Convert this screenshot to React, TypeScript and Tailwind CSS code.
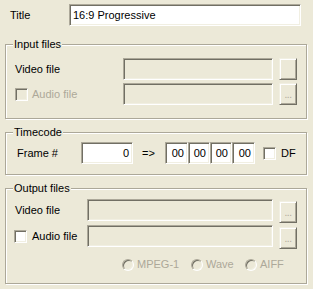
const sunken =
  "border border-t-[#ACA899] border-l-[#ACA899] border-b-white border-r-white shadow-[inset_1px_1px_0_#716F64,inset_-1px_-1px_0_#F1EFE2]";
const raised =
  "border border-t-[#F1EFE2] border-l-[#F1EFE2] border-b-[#716F64] border-r-[#716F64] shadow-[inset_1px_1px_0_white,inset_-1px_-1px_0_#ACA899]";

function Group({ label, className, children }: { label: string; className: string; children: React.ReactNode }) {
  return (
    <div className={`relative ml-[5px] w-[302px] border border-[#ACA899] shadow-[1px_1px_0_white,inset_1px_1px_0_white] ${className}`}>
      <span className="absolute left-[7px] top-[-7px] bg-[#ECE9D8] px-[1px] leading-[13px]">{label}</span>
      {children}
    </div>
  );
}

function Browse({ dots, className = "" }: { dots?: boolean; className?: string }) {
  return (
    <div className={`flex h-[22px] w-[18px] items-center justify-center bg-[#ECE9D8] text-[10px] leading-none text-[#ACA899] ${raised} ${className}`}>
      {dots ? <span className="mt-[1px] tracking-[-0.5px]">...</span> : null}
    </div>
  );
}

function Check({ disabled }: { disabled?: boolean }) {
  return <div className={`h-[13px] w-[13px] shrink-0 ${sunken} ${disabled ? "bg-[#ECE9D8]" : "bg-white"}`} />;
}

function Radio({ label }: { label: string }) {
  return (
    <div className="flex items-center gap-[3px] text-[#ACA899]">
      <div className="h-[12px] w-[12px] rounded-full border border-t-[#ACA899] border-l-[#ACA899] border-b-white border-r-white shadow-[inset_1px_1px_0_#716F64,inset_-1px_-1px_0_#F1EFE2]" />
      <span>{label}</span>
    </div>
  );
}

function TcBox({ className }: { className: string }) {
  return <div className={`flex h-[22px] items-center justify-end bg-white pr-[3px] ${sunken} ${className}`}>00</div>;
}

export default function App() {
  return (
    <div className="h-[289px] w-[313px] overflow-hidden bg-[#ECE9D8] font-['Liberation_Sans',Arial,sans-serif] text-[11px] leading-[13px] text-black">
      {/* title */}
      <div className="flex items-center pt-[4px]">
        <span className="w-[69px] pl-[10px]">Title</span>
        <div className={`flex h-[22px] w-[232px] items-center bg-white pl-[3px] ${sunken}`}>16:9 Progressive</div>
      </div>

      <Group label="Input files" className="mt-[18px] h-[75px] pl-[9px] pt-[13px]">
        <div className="flex flex-col gap-[3px]">
          <div className="flex h-[22px] items-center">
            <span className="w-[108px]">Video file</span>
            <div className={`h-[22px] w-[150px] ${sunken}`} />
            <Browse className="ml-[6px]" />
          </div>
          <div className="flex h-[22px] items-center">
            <div className="flex w-[108px] items-center gap-[4px] text-[#ACA899]">
              <Check disabled />
              <span>Audio file</span>
            </div>
            <div className={`h-[22px] w-[150px] ${sunken}`} />
            <Browse dots className="ml-[6px]" />
          </div>
        </div>
      </Group>

      <Group label="Timecode" className="mt-[13px] h-[43px] pl-[11px] pt-[9px]">
        <div className="flex h-[22px] items-center">
          <span className="w-[64px]">Frame #</span>
          <div className={`flex h-[22px] w-[52px] items-center justify-end bg-white pr-[3px] ${sunken}`}>0</div>
          <span className="ml-[9px] w-[23px]">=&gt;</span>
          <TcBox className="w-[23px]" />
          <TcBox className="w-[22px]" />
          <TcBox className="w-[22px]" />
          <TcBox className="w-[23px]" />
          <div className="ml-[8px]">
            <Check />
          </div>
          <span className="ml-[5px]">DF</span>
        </div>
      </Group>

      <Group label="Output files" className="mt-[13px] h-[96px] pl-[8px] pt-[10px]">
        <div className="flex flex-col gap-[2px]">
          <div className="flex items-start">
            <span className="flex h-[22px] w-[73px] items-center pl-[1px]">Video file</span>
            <div className={`h-[22px] w-[186px] ${sunken}`} />
            <Browse dots className="ml-[6px] mt-[2px]" />
          </div>
          <div className="flex items-start">
            <div className="flex h-[22px] w-[73px] items-center gap-[5px]">
              <Check />
              <span>Audio file</span>
            </div>
            <div className={`h-[22px] w-[186px] ${sunken}`} />
            <Browse dots className="ml-[6px] mt-[2px]" />
          </div>
        </div>
        <div className="ml-[108px] mt-[9px] flex items-center">
          <div className="w-[69px]">
            <Radio label="MPEG-1" />
          </div>
          <div className="w-[54px]">
            <Radio label="Wave" />
          </div>
          <Radio label="AIFF" />
        </div>
      </Group>
    </div>
  );
}
